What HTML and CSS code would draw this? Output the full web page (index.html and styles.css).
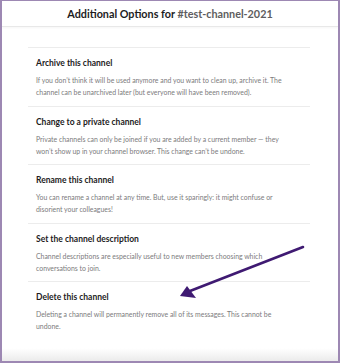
FILE: index.html
```html
<!DOCTYPE html>
<html>
<head>
<meta charset="utf-8">
<link rel="stylesheet" href="styles.css">
</head>
<body>
<div class="frame">
  <header class="header">
    <h1 class="title">Additional Options for <span class="channel">#test-channel-2021</span></h1>
  </header>
  <main class="content">
    <section class="option">
      <h2 class="option-title">Archive this channel</h2>
      <p class="option-desc">If you don’t think it will be used anymore and you want to clean up, archive it. The channel can be unarchived later (but everyone will have been removed).</p>
    </section>
    <section class="option">
      <h2 class="option-title">Change to a private channel</h2>
      <p class="option-desc">Private channels can only be joined if you are added by a current member — they won’t show up in your channel browser. This change can’t be undone.</p>
    </section>
    <section class="option">
      <h2 class="option-title">Rename this channel</h2>
      <p class="option-desc">You can rename a channel at any time. But, use it sparingly: it might confuse or disorient your colleagues!</p>
    </section>
    <section class="option">
      <h2 class="option-title">Set the channel description</h2>
      <p class="option-desc">Channel descriptions are especially useful to new members choosing which conversations to join.</p>
    </section>
    <section class="option">
      <h2 class="option-title">Delete this channel</h2>
      <p class="option-desc">Deleting a channel will permanently remove all of its messages. This cannot be undone.</p>
    </section>
  </main>
  <div class="footer-fade"></div>
  <svg class="arrow" width="340" height="363" viewBox="0 0 340 363">
    <line x1="303" y1="247" x2="190" y2="291" stroke="#3f1a72" stroke-width="2.6" stroke-linecap="round"/>
    <polygon points="180,296 187,286 196,298" fill="#3f1a72"/>
  </svg>
</div>
</body>
</html>
```
FILE: styles.css
```css
html, body {
  margin: 0;
  padding: 0;
  background: #ffffff;
}
.frame {
  position: relative;
  width: 340px;
  height: 363px;
  box-sizing: border-box;
  border: 2px solid #9d88b3;
  border-top-width: 1px;
  display: flex;
  flex-direction: column;
  font-family: Lato, "Noto Sans", sans-serif;
  overflow: hidden;
}
.header {
  height: 25px;
  flex: none;
  display: flex;
  align-items: center;
  justify-content: center;
  border-bottom: 1px solid #e8e8e8;
  box-shadow: 0 1px 2px rgba(0,0,0,0.04);
}
.title {
  margin: 0;
  font-size: 10.8px;
  font-weight: 700;
  color: #1d1c1d;
}
.channel {
  color: #5e5d60;
}
.content {
  margin: 20px 28px 0 26px;
  flex: none;
}
.option {
  border-top: 1px solid #ececec;
  padding: 9px 8px 7.5px 8px;
}
.option-title {
  margin: 0;
  font-size: 8.5px;
  line-height: 12px;
  font-weight: 700;
  color: #1d1c1d;
}
.option-desc {
  margin: 5px 0 0 0;
  font-size: 6.9px;
  line-height: 12px;
  color: #7c7b7d;
  max-width: 258px;
}
.footer-fade {
  flex: 1;
  background: linear-gradient(to bottom, #ffffff 0%, #ffffff 40%, #ebebeb 100%);
}
.arrow {
  position: absolute;
  left: -2px;
  top: -1px;
  pointer-events: none;
}
```
